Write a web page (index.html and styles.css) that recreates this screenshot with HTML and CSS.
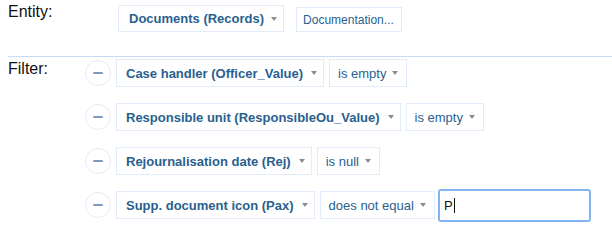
FILE: index.html
```html
<!DOCTYPE html>
<html>
<head>
<meta charset="utf-8">
<link rel="stylesheet" href="styles.css">
</head>
<body>
<div class="section entity">
  <div class="label entity-label">Entity:</div>
  <div class="entity-controls">
    <div class="select field entity-select"><span>Documents (Records)</span><svg class="arrow" width="6" height="4" viewBox="0 0 6 4"><path d="M0 0H6L3 4Z"/></svg></div>
    <div class="doc-btn">Documentation...</div>
  </div>
</div>
<div class="sep"></div>
<div class="section filter">
  <div class="label filter-label">Filter:</div>
  <div class="rows">
    <div class="row">
      <div class="remove"><span class="minus"></span></div>
      <div class="select field"><span>Case handler (Officer_Value)</span><svg class="arrow" width="6" height="4" viewBox="0 0 6 4"><path d="M0 0H6L3 4Z"/></svg></div>
      <div class="select op"><span>is empty</span><svg class="arrow" width="6" height="4" viewBox="0 0 6 4"><path d="M0 0H6L3 4Z"/></svg></div>
    </div>
    <div class="row">
      <div class="remove"><span class="minus"></span></div>
      <div class="select field"><span>Responsible unit (ResponsibleOu_Value)</span><svg class="arrow" width="6" height="4" viewBox="0 0 6 4"><path d="M0 0H6L3 4Z"/></svg></div>
      <div class="select op"><span>is empty</span><svg class="arrow" width="6" height="4" viewBox="0 0 6 4"><path d="M0 0H6L3 4Z"/></svg></div>
    </div>
    <div class="row">
      <div class="remove"><span class="minus"></span></div>
      <div class="select field"><span>Rejournalisation date (Rej)</span><svg class="arrow" width="6" height="4" viewBox="0 0 6 4"><path d="M0 0H6L3 4Z"/></svg></div>
      <div class="select op"><span>is null</span><svg class="arrow" width="6" height="4" viewBox="0 0 6 4"><path d="M0 0H6L3 4Z"/></svg></div>
    </div>
    <div class="row">
      <div class="remove"><span class="minus"></span></div>
      <div class="select field"><span>Supp. document icon (Pax)</span><svg class="arrow" width="6" height="4" viewBox="0 0 6 4"><path d="M0 0H6L3 4Z"/></svg></div>
      <div class="select op"><span>does not equal</span><svg class="arrow" width="6" height="4" viewBox="0 0 6 4"><path d="M0 0H6L3 4Z"/></svg></div>
      <div class="value-input">P<span class="caret"></span></div>
    </div>
  </div>
</div>
</body>
</html>
```
FILE: styles.css
```css
html, body {
  margin: 0;
  padding: 0;
  background: #ffffff;
}
body {
  font-family: "Liberation Sans", Arial, sans-serif;
  width: 612px;
  height: 234px;
  overflow: hidden;
}
.section {
  display: flex;
  padding-left: 8px;
}
.label {
  width: 77px;
  flex: none;
  font-size: 16px;
  line-height: 18px;
  color: #111111;
}
.entity {
  height: 56px;
  box-sizing: border-box;
}
.entity-label {
  padding-top: 3px;
}
.entity-controls {
  margin-left: 33px;
  margin-top: 5px;
  display: flex;
  align-items: flex-end;
  gap: 12px;
  height: 27px;
}
.sep {
  margin-left: 8px;
  height: 1px;
  background: #c6dcf6;
}
.filter {
  padding-top: 2px;
}
.filter-label {
  padding-top: 1px;
}
.rows {
  display: flex;
  flex-direction: column;
  gap: 16px;
}
.row {
  display: flex;
  align-items: center;
  height: 28px;
}
.remove {
  width: 26px;
  height: 26px;
  box-sizing: border-box;
  border: 1px solid #e4edf8;
  border-radius: 50%;
  display: flex;
  align-items: center;
  justify-content: center;
  margin-right: 5px;
}
.minus {
  width: 10px;
  height: 2px;
  background: #7f9dbb;
  border-radius: 1px;
}
.select {
  display: flex;
  align-items: center;
  height: 28px;
  box-sizing: border-box;
  border: 1px solid #e2ecf8;
  color: #295f8f;
  font-size: 13px;
  padding: 0 8px 0 8px;
  gap: 6px;
  white-space: nowrap;
}
.field {
  font-weight: bold;
  padding-left: 9px;
  padding-right: 6px;
  gap: 8px;
}
.entity-select {
  height: 27px;
  padding-left: 10px;
  padding-right: 6px;
  gap: 7px;
}
.op {
  margin-left: 5px;
}
.arrow {
  fill: #8c8c8c;
  flex: none;
}
.doc-btn {
  height: 25px;
  box-sizing: border-box;
  border: 1px solid #e2ecf8;
  color: #295f8f;
  font-size: 12px;
  display: flex;
  align-items: center;
  padding: 0 7px 0 6px;
  white-space: nowrap;
}
.value-input {
  margin: -2px 0 -3px 3px;
  width: 153px;
  height: 33px;
  box-sizing: border-box;
  border: 2px solid #83b4f4;
  border-radius: 3px;
  display: flex;
  align-items: center;
  padding-left: 4px;
  font-size: 13px;
  color: #111111;
}
.caret {
  width: 1px;
  height: 15px;
  background: #111111;
  margin-left: 1px;
}
```
